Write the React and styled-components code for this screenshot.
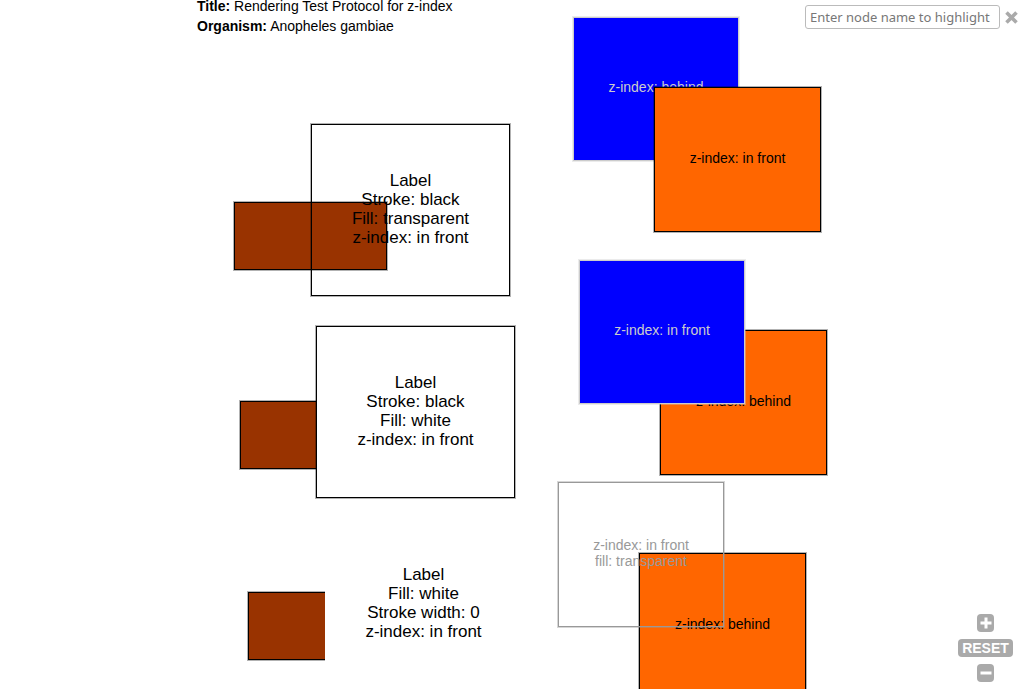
import React from "react";
import styled, { createGlobalStyle } from "styled-components";

const GlobalStyle = createGlobalStyle`
  * { box-sizing: border-box; }
  body {
    margin: 0;
    background: #fff;
    color: #000;
    font-family: "Liberation Sans", Arial, sans-serif;
  }
`;

const Viewer = styled.main`
  position: relative;
  height: 100vh;
  overflow: hidden;
`;

const Info = styled.header`
  display: flex;
  flex-direction: column;
  gap: 8px;
  padding-left: 197px;
  font-size: 14px;
  line-height: 12px;
`;

const InfoLine = styled.p`
  margin: 0;
`;

const Node = styled.div`
  position: absolute;
  left: ${(p) => p.$x}px;
  top: ${(p) => p.$y}px;
  width: ${(p) => p.$w}px;
  height: ${(p) => p.$h}px;
  display: flex;
  align-items: center;
  justify-content: center;
  text-align: center;
  white-space: pre-line;
`;

const BrownNode = styled(Node)`
  background: #993300;
  border: 1px solid #000;
  box-shadow: 0 0 0 1px rgba(0, 0, 0, 0.3);
`;

const LabelNode = styled(Node)`
  padding-bottom: 2px;
  background: ${(p) => p.$fill};
  border: ${(p) => (p.$stroked ? "1px solid #000" : "0")};
  box-shadow: ${(p) => (p.$stroked ? "0 0 0 1px rgba(0, 0, 0, 0.3)" : "none")};
  font-size: 17px;
  line-height: 19px;
`;

const ShapeNode = styled(Node)`
  padding-bottom: 4px;
  background: ${(p) => p.$fill};
  color: ${(p) => p.$color};
  border: 1px solid ${(p) => p.$color};
  box-shadow: 0 0 0 1px ${(p) => p.$halo};
  font-size: 14px;
  line-height: 16px;
`;

const Search = styled.form`
  position: absolute;
  top: 5px;
  right: 6px;
  display: flex;
  align-items: center;
  gap: 5px;
`;

const SearchInput = styled.input`
  width: 195px;
  height: 24px;
  padding: 0 4px;
  border: 1px solid #bbb;
  border-radius: 3px;
  background: #fff;
  color: #333;
  font-family: "Noto Sans", sans-serif;
  font-size: 13px;
  outline: none;

  &::placeholder {
    color: #777;
    opacity: 1;
  }
`;

const ClearButton = styled.button`
  display: flex;
  padding: 0;
  border: 0;
  background: none;
  color: #aaa;
  cursor: pointer;
`;

const ZoomControls = styled.div`
  position: absolute;
  right: 11px;
  bottom: 7px;
  display: flex;
  flex-direction: column;
  align-items: center;
  gap: 7px;
`;

const ZoomButton = styled.button`
  display: flex;
  align-items: center;
  justify-content: center;
  width: ${(p) => (p.$wide ? 55 : 17)}px;
  height: 18px;
  padding: 0;
  border: 0;
  border-radius: 4px;
  background: #aaa;
  color: #fff;
  font: bold 14px/18px "Liberation Sans", Arial, sans-serif;
  cursor: pointer;
`;

const BLUE = { $fill: "#0000ff", $color: "#cccccc", $halo: "rgba(204, 204, 204, 0.4)" };
const ORANGE = { $fill: "#ff6600", $color: "#000000", $halo: "rgba(0, 0, 0, 0.3)" };
const CLEAR = { $fill: "transparent", $color: "#999999", $halo: "rgba(153, 153, 153, 0.4)" };

export default function App() {
  return (
    <Viewer>
      <GlobalStyle />
      <Info>
        <InfoLine><b>Title:</b> Rendering Test Protocol for z-index</InfoLine>
        <InfoLine><b>Organism:</b> Anopheles gambiae</InfoLine>
      </Info>

      <BrownNode $x={234} $y={202} $w={153} $h={68} />
      <LabelNode $x={311} $y={124} $w={199} $h={172} $fill="transparent" $stroked>
        {"Label\nStroke: black\nFill: transparent\nz-index: in front"}
      </LabelNode>

      <BrownNode $x={240} $y={401} $w={153} $h={68} />
      <LabelNode $x={316} $y={326} $w={199} $h={172} $fill="#fff" $stroked>
        {"Label\nStroke: black\nFill: white\nz-index: in front"}
      </LabelNode>

      <BrownNode $x={248} $y={592} $w={153} $h={68} />
      <LabelNode $x={325} $y={518} $w={197} $h={172} $fill="#fff">
        {"Label\nFill: white\nStroke width: 0\nz-index: in front"}
      </LabelNode>

      <ShapeNode $x={573} $y={17} $w={166} $h={144} {...BLUE}>z-index: behind</ShapeNode>
      <ShapeNode $x={654} $y={87} $w={167} $h={145} {...ORANGE}>z-index: in front</ShapeNode>

      <ShapeNode $x={660} $y={330} $w={167} $h={145} {...ORANGE}>z-index: behind</ShapeNode>
      <ShapeNode $x={579} $y={260} $w={166} $h={144} {...BLUE}>z-index: in front</ShapeNode>

      <ShapeNode $x={639} $y={553} $w={167} $h={145} {...ORANGE}>z-index: behind</ShapeNode>
      <ShapeNode $x={558} $y={482} $w={166} $h={145} {...CLEAR}>
        {"z-index: in front\nfill: transparent"}
      </ShapeNode>

      <Search onSubmit={(e) => e.preventDefault()}>
        <SearchInput
          type="text"
          aria-label="Node name to highlight"
          placeholder="Enter node name to highlight"
        />
        <ClearButton type="reset" aria-label="Clear">
          <svg width="13" height="13" viewBox="0 0 13 13" fill="none" stroke="currentColor" strokeWidth="3.6">
            <path d="M1.5 1.5 11.5 11.5M11.5 1.5 1.5 11.5" />
          </svg>
        </ClearButton>
      </Search>

      <ZoomControls>
        <ZoomButton type="button" aria-label="Zoom in">
          <svg width="12" height="12" viewBox="0 0 12 12" stroke="currentColor" strokeWidth="3">
            <path d="M0.5 6H11.5M6 0.5V11.5" />
          </svg>
        </ZoomButton>
        <ZoomButton type="button" $wide>RESET</ZoomButton>
        <ZoomButton type="button" aria-label="Zoom out">
          <svg width="12" height="12" viewBox="0 0 12 12" stroke="currentColor" strokeWidth="3">
            <path d="M0.5 6H11.5" />
          </svg>
        </ZoomButton>
      </ZoomControls>
    </Viewer>
  );
}
